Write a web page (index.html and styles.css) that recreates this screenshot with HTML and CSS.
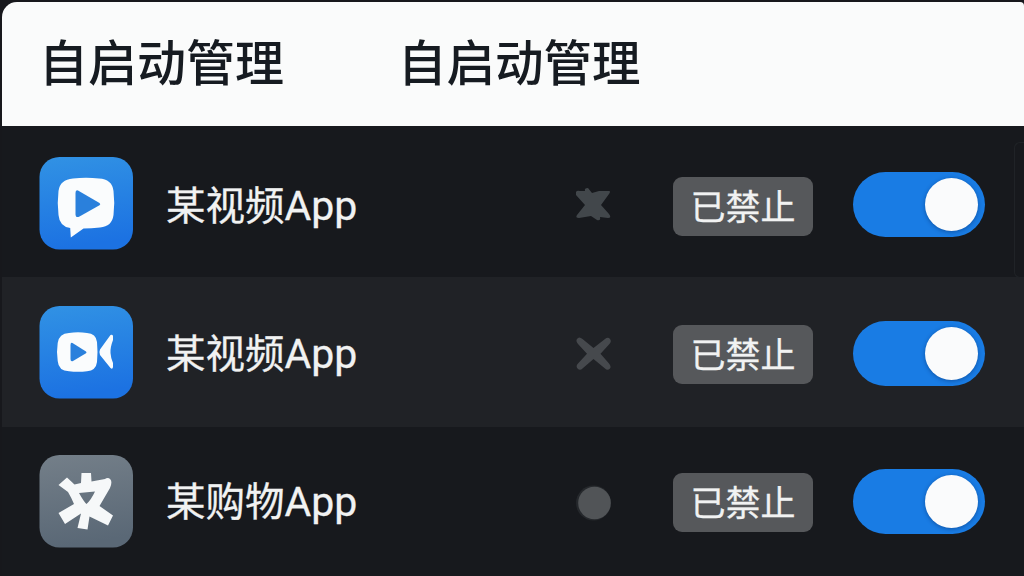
FILE: index.html
```html
<!DOCTYPE html>
<html lang="zh-CN">
<head>
<meta charset="utf-8">
<title>自启动管理</title>
<link rel="stylesheet" href="styles.css">
</head>
<body>
<main class="screen">
  <header class="header">
    <h1 class="title">自启动管理</h1>
    <h1 class="title title-second">自启动管理</h1>
  </header>
  <section class="list">
    <div class="row row-first">
      <svg class="app-icon" viewBox="0 0 94 93">
        <defs><linearGradient id="blue" x1="0" y1="0" x2="0.15" y2="1"><stop offset="0" stop-color="#3192e4"/><stop offset="1" stop-color="#1c72e2"/></linearGradient></defs>
        <rect x="0.500" width="93.500" height="92.500" rx="20" fill="url(#blue)"/>
        <path d="M34 21.500Q47 20 60 21.500Q73 22 74.500 34Q76 46 74.500 58Q73 69.500 61 70.500Q52 71.300 44.500 71.500L31.800 80.500L31.200 71Q20.500 69.500 19.500 58Q18 46 19.500 34Q21 22.500 34 21.500Z" fill="#fafcfd"/>
        <path d="M39 33.500L60.500 46Q62 47.200 60.500 48.300L40.500 59.500Q36.500 61.500 36.500 57V36Q36.500 32.500 39 33.500Z" fill="#2a80dc"/>
      </svg>
      <span class="name">某视频<span class="latin">App</span></span>
      <svg class="mark" viewBox="0 0 40 40"><path d="M2 6Q3 4 6 5H11Q10 2 14 2L18 7L25 5H35Q37 5 35 8L27 19L35 28Q38 32 34 32L26 31Q27 35 23 34L17 30L5 32Q1 32 3 29L11 19L2 9Z" fill="#42474b"/></svg>
      <span class="badge">已禁止</span>
      <span class="toggle"><span class="knob"></span></span>
    </div>
    <div class="row row-alt">
      <svg class="app-icon" viewBox="0 0 94 93">
        <rect x="0.500" width="93.500" height="92.500" rx="20" fill="url(#blue)"/>
        <path d="M30 27Q39 25.700 48 27Q57 27.500 58 36Q59 46 58 56Q57 64.500 48 65.300Q39 66.300 30 65.300Q19.500 65 18.700 55Q17.300 46 18.700 37Q20 27.500 30 27Z" fill="#fafcfd"/>
        <path d="M33.500 37L47 45.500Q48 46.500 47 47.300L34 55Q31.500 56 31.500 53V39Q31.500 36 33.500 37Z" fill="#2a80dc"/>
        <path d="M71.500 29Q73.500 28 74 30V34Q71 42 71.500 47Q71.800 52 74 57V61Q73.500 64 71.500 62L61 49Q59.800 46 61 43.500Z" fill="#fafcfd"/>
      </svg>
      <span class="name">某视频<span class="latin">App</span></span>
      <svg class="mark" viewBox="0 0 40 40"><path d="M3 4Q5 1 8.500 4L19.500 13L31 4Q34 1.500 36 4Q38 6.500 35 9.500L26.500 18.800L35 28.500Q37.500 31.500 36 33.500Q33.500 36 31 33.500L19.500 24L8.500 33.500Q6 36 3.500 33.500Q1.500 31 4 28.500L13 18.800L4 9Q1.500 6 3 4Z" fill="#46494d"/></svg>
      <span class="badge">已禁止</span>
      <span class="toggle"><span class="knob"></span></span>
    </div>
    <div class="row row-last">
      <svg class="app-icon" viewBox="0 0 94 93">
        <defs><linearGradient id="gray" x1="0" y1="0" x2="0.15" y2="1"><stop offset="0" stop-color="#747f89"/><stop offset="1" stop-color="#5a6876"/></linearGradient></defs>
        <rect x="0.500" width="93.500" height="92.500" rx="20" fill="url(#gray)"/>
        <path fill-rule="evenodd" d="M19.500 30L28 22.500L35.500 29.500L42 28L42.500 18H52L52.500 26.500L66 24Q69 22 71.500 24.500Q73.500 27 71 33L60.500 51L74 60.500L69 70.500L50.500 61.500L48.500 74.500L38.500 73L42 58.500L26 69L19.500 58L35 49Q32 42 29 37ZM40 38Q45 47 47.500 49Q52 45 56 36.500Z" fill="#f6f8f9"/>
      </svg>
      <span class="name">某购物<span class="latin">App</span></span>
      <svg class="mark" viewBox="0 0 40 40"><circle cx="19.500" cy="19" r="17.500" fill="#25282c"/><circle cx="20.500" cy="19" r="16.300" fill="#515457"/></svg>
      <span class="badge">已禁止</span>
      <span class="toggle"><span class="knob"></span></span>
    </div>
  </section>
</main>
</body>
</html>
```

FILE: styles.css
```css
* { box-sizing: border-box; }

body {
  margin: 0;
  background: #17181c;
  font-family: "Noto Sans CJK SC", sans-serif;
}

.screen {
  width: 1024px;
  height: 576px;
  padding: 2px 0 0 2px;
  overflow: hidden;
  background: #17181c;
}

.header {
  display: flex;
  gap: 114px;
  height: 124px;
  padding: 22px 0 0 37px;
  border-radius: 15px 4px 0 0;
  background: #fafbfb;
}

.title {
  width: 245px;
  margin: 0;
  color: #161b21;
  font-size: 49px;
  font-weight: 500;
  line-height: 72px;
  white-space: nowrap;
}

.title-second { font-size: 48.500px; }

.list {
  display: flex;
  flex-direction: column;
}

.row {
  display: grid;
  grid-template-columns: 94px 401px 40px 140px 132px;
  align-items: start;
  padding: 31px 0 0 37px;
  background: #17191d;
}

.row-first {
  position: relative;
  height: 151px;
}

.row-first::after {
  content: "";
  position: absolute;
  top: 16px;
  right: 0;
  width: 9px;
  height: 134px;
  border: 1px solid #202327;
  border-right: 0;
  border-radius: 6px 0 0 6px;
}

.row-alt { height: 150px; padding-top: 29px; background: #202226; }
.row-last { height: 149px; padding-top: 28px; }

.app-icon {
  width: 94px;
  height: 93px;
}

.name {
  margin: 16px 0 0 33px;
  color: #f1f2f2;
  font-size: 39.500px;
  line-height: 60px;
  white-space: nowrap;
  -webkit-text-stroke: 0.3px #f1f2f2;
}

.latin {
  font-family: Roboto, sans-serif;
  font-size: 41px;
}

.mark {
  width: 40px;
  height: 40px;
  margin: 29px 0 0 40px;
}

.badge {
  width: 140px;
  height: 59px;
  margin: 20px 0 0 99px;
  border-radius: 9px;
  background: #56585b;
  color: #f1f2f2;
  font-size: 35px;
  line-height: 55px;
  text-align: center;
  -webkit-text-stroke: 0.3px #f1f2f2;
}

.row-alt .name { margin-top: 15px; }
.row-alt .badge { margin-top: 18.500px; }
.row-last .name { margin-top: 14px; }
.row-last .badge { margin-top: 17.500px; }

.toggle {
  display: flex;
  justify-content: flex-end;
  width: 132px;
  height: 65px;
  margin: 15px 0 0 139px;
  padding: 6px 7px;
  border-radius: 33px;
  background: #197ce4;
}

.row-last .toggle { margin-top: 14px; }

.knob {
  width: 53px;
  height: 53px;
  border-radius: 50%;
  background: #fafbfc;
  box-shadow: 0 1px 4px rgba(5, 35, 90, 0.45);
}
```
